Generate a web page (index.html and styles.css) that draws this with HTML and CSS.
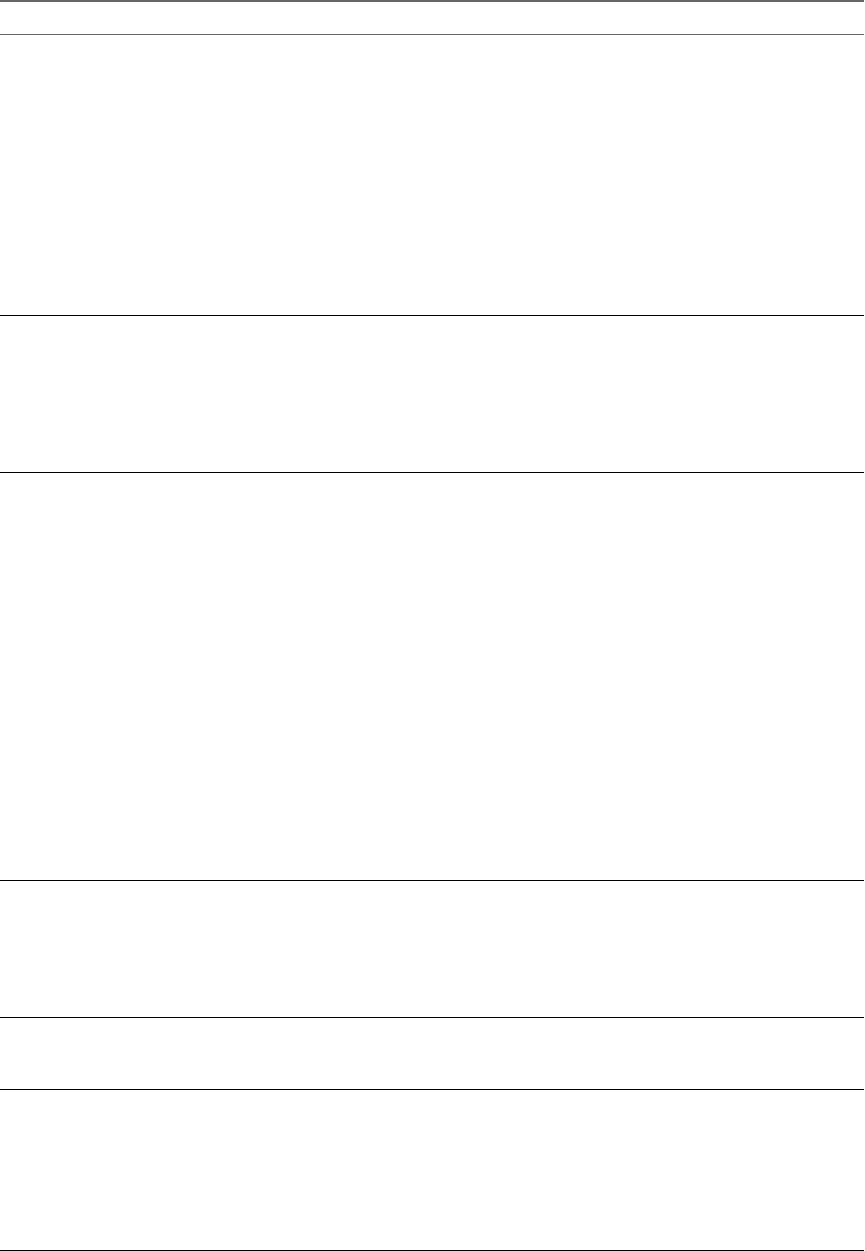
FILE: index.html
```html
<!DOCTYPE html>
<html>
<head>
<meta charset="utf-8">
<link rel="stylesheet" href="styles.css">
</head>
<body>
<div class="sheet">
  <div class="head"></div>
  <div class="row r1"></div>
  <div class="row r2"></div>
  <div class="row r3"></div>
  <div class="row r4"></div>
  <div class="row r5"></div>
  <div class="row r6"></div>
</div>
</body>
</html>
```
FILE: styles.css
```css
html, body {
  margin: 0;
  padding: 0;
  background: #ffffff;
  font-family: "Liberation Sans", Arial, sans-serif;
}
.sheet {
  width: 864px;
  display: flex;
  flex-direction: column;
  border-top: 2px solid #666666;
}
.head {
  height: 32px;
  border-bottom: 1px solid #666666;
}
.row {
  border-bottom: 1px solid #000000;
}
.r1 { height: 280px; }
.r2 { height: 156px; }
.r3 { height: 407px; }
.r4 { height: 136px; }
.r5 { height: 71px; }
.r6 { height: 160px; }
```
